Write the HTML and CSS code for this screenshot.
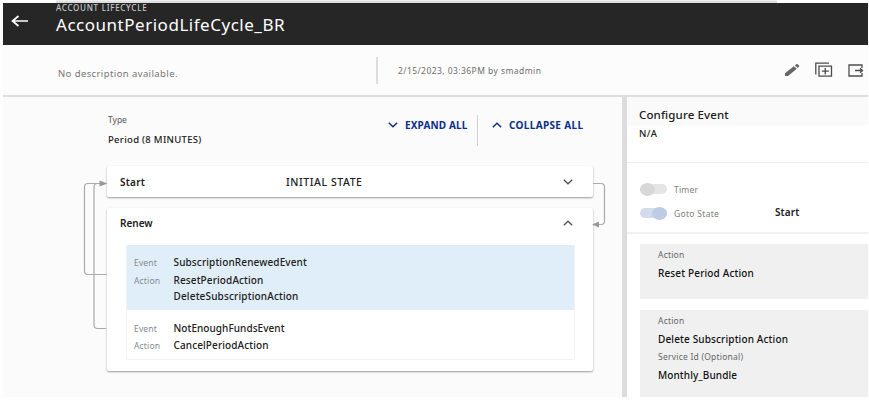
FILE: index.html
```html
<!DOCTYPE html>
<html lang="en">
<head>
<meta charset="utf-8">
<title>Account Lifecycle</title>
<link rel="stylesheet" href="styles.css">
</head>
<body>
<div class="top-strip"></div>
<div class="app">
  <header class="header">
    <svg class="back" width="18" height="14" viewBox="0 0 18 14"><path d="M7.5 2 1.500 7l6 5M1.500 7H17" fill="none" stroke="#fff" stroke-width="1.700"/></svg>
    <div class="titles">
      <div class="eyebrow">ACCOUNT LIFECYCLE</div>
      <h1 class="title">AccountPeriodLifeCycle_BR</h1>
    </div>
  </header>
  <div class="info">
    <div class="description">No description available.</div>
    <div class="stamp">2/15/2023, 03:36PM by smadmin</div>
    <div class="tools">
      <svg width="16" height="14" viewBox="0 0 16 14"><path d="M1 13v-2.700L9.800 3.300l3 2.500L4 13zM10.800 2.500 12.300 1.300q.7-.5 1.400 0l1.300 1.100q.6.6 0 1.200L13.800 5z" fill="#666"/></svg>
      <svg width="18" height="16" viewBox="0 0 18 16"><path d="M.8 12.500V1.200H14M4 4.200h12.500V14.200H4zM10.250 6v6.500M6.800 9.200h7" fill="none" stroke="#4c4c4c" stroke-width="1.300"/></svg>
      <svg width="16" height="13" viewBox="0 0 16 13"><path d="M14 4V1H1v11h13V9M7 6.500h7.500M12 4.300l2.500 2.200L12 8.700" fill="none" stroke="#4c4c4c" stroke-width="1.300"/></svg>
    </div>
  </div>
  <div class="main">
    <section class="states">
      <div class="toolbar">
        <div class="type">
          <div class="type-label">Type</div>
          <div class="type-value">Period (8 MINUTES)</div>
        </div>
        <div class="toggle-all expand">
          <svg width="10" height="6" viewBox="0 0 10 6"><path d="M.8.8 5 4.800 9.200.8" fill="none" stroke="#0c2e8a" stroke-width="1.500"/></svg>
          <span class="expand-text">EXPAND ALL</span>
        </div>
        <div class="toggle-all collapse">
          <svg width="10" height="6" viewBox="0 0 10 6"><path d="M.8 5.200 5 1.200l4.200 4" fill="none" stroke="#0c2e8a" stroke-width="1.500"/></svg>
          <span class="collapse-text">COLLAPSE ALL</span>
        </div>
      </div>
      <div class="card start">
        <div class="card-head">
          <span class="card-name">Start</span>
          <span class="initial">INITIAL STATE</span>
          <svg width="10" height="6" viewBox="0 0 10 6"><path d="M.8.8 5 4.800 9.200.8" fill="none" stroke="#555" stroke-width="1.400"/></svg>
        </div>
      </div>
      <div class="card renew">
        <div class="card-head">
          <span class="card-name renew-name">Renew</span>
          <svg width="10" height="6" viewBox="0 0 10 6"><path d="M.8 5.200 5 1.200l4.200 4" fill="none" stroke="#555" stroke-width="1.400"/></svg>
        </div>
        <div class="events">
          <div class="event selected">
            <div class="row"><span class="key">Event</span><span class="val v1">SubscriptionRenewedEvent</span></div>
            <div class="row"><span class="key">Action</span><span class="val v2">ResetPeriodAction</span></div>
            <div class="row second"><span class="key"></span><span class="val v3">DeleteSubscriptionAction</span></div>
          </div>
          <div class="event">
            <div class="row"><span class="key">Event</span><span class="val v4">NotEnoughFundsEvent</span></div>
            <div class="row"><span class="key">Action</span><span class="val v5">CancelPeriodAction</span></div>
          </div>
        </div>
      </div>
      <svg class="links" width="619" height="300" viewBox="3 97 619 300">
        <g fill="none" stroke="#aaa" stroke-width="1.200">
          <path d="M107 274.500H88q-3.500 0-3.500-3.500V187q0-3.500 3.500-3.500H101"/>
          <path d="M106 328.500H97.500q-3.500 0-3.500-3.500V187q0-3.500 3.500-3.500"/>
          <path d="M593 183.500h8q3.500 0 3.500 3.500v34q0 3.500-3.500 3.500h-3"/>
        </g>
        <path d="M99.500 180.500l8 3-8 3zM599 221.500l-7 3 7 3z" fill="#999"/>
      </svg>
    </section>
    <aside class="panel">
      <div class="configure">
        <h2 class="configure-title">Configure Event</h2>
        <div class="configure-value">N/A</div>
      </div>
      <div class="switches">
        <div class="switch-row">
          <span class="switch"><i class="knob"></i></span>
          <span class="switch-label timer">Timer</span>
        </div>
        <div class="switch-row">
          <span class="switch on"><i class="knob"></i></span>
          <span class="switch-label goto">Goto State</span>
          <span class="target">Start</span>
        </div>
      </div>
      <div class="actions">
        <div class="action">
          <div class="field">Action</div>
          <div class="field-value a1">Reset Period Action</div>
        </div>
        <div class="action last">
          <div class="field">Action</div>
          <div class="field-value a2">Delete Subscription Action</div>
          <div class="field optional">Service Id (Optional)</div>
          <div class="field-value a3">Monthly_Bundle</div>
        </div>
      </div>
    </aside>
  </div>
</div>
</body>
</html>
```
FILE: styles.css
```css
* { box-sizing: border-box; }
body { margin: 0; width: 869px; height: 406px; overflow: hidden; background: #fff; font-family: "Noto Sans", sans-serif; color: #202020; white-space: nowrap; }
svg { display: block; flex: none; }
h1, h2 { margin: 0; font-weight: 400; }
.top-strip { width: 721px; height: 3px; margin-left: 56px; background: #dfdfdf; border-top: 1px solid #efefef; }
.app { margin-left: 3px; width: 865px; height: 394px; display: flex; flex-direction: column; background: #fcfcfc; }

.header { display: flex; height: 42px; flex: none; background: #262626; color: #fff; }
.back { margin: 11px 0 0 8px; }
.titles { margin-left: 27px; }
.eyebrow { font-size: 8px; font-weight: 500; line-height: 10px; letter-spacing: .720px; color: #c8c8c8; }
.title { font-size: 17px; line-height: 24px; letter-spacing: .520px; }

.info { display: flex; height: 52px; flex: none; border-bottom: 2px solid #dedede; }
.description { width: 318px; margin-left: 55px; margin-top: 22px; line-height: 14px; font-size: 9.5px; letter-spacing: .400px; color: #757575; }
.stamp { width: 404px; height: 27px; margin-top: 12px; border-left: 2px solid #dedede; padding-left: 20px; line-height: 27px; font-size: 8.5px; letter-spacing: .440px; color: #6d6d6d; }
.tools { display: flex; align-items: center; gap: 15px; height: 50px; margin-left: 4px; }

.main { display: flex; flex: 1; min-height: 0; }
.states { position: relative; width: 619px; height: 300px; flex: none; padding: 0 29px 0 104px; background: #fbfbfb; overflow: hidden; }
.toolbar { display: flex; height: 69px; }
.type { width: 281px; padding: 15px 0 0 1px; line-height: 16px; }
.type-label { font-size: 8.5px; color: #555; }
.type-value { margin-top: 4px; font-size: 9.5px; font-weight: 500; letter-spacing: .300px; }
.toggle-all { display: flex; align-items: center; height: 31px; margin-top: 18px; padding-bottom: 11px; gap: 7px; color: #0c2e8a; font-size: 10px; font-weight: 700; }
.toggle-all.expand { width: 89px; }
.toggle-all.collapse { padding-left: 14px; border-left: 1px solid #d0d0d0; }
.expand-text { letter-spacing: .140px; }
.collapse-text { letter-spacing: .340px; }

.card { background: #fff; border-radius: 2px; box-shadow: 0 1px 2px rgba(0,0,0,.38); }
.card-head { display: flex; align-items: center; height: 31px; padding: 0 20px 0 13px; }
.card-head svg { margin-left: auto; }
.card-name { width: 166px; font-size: 10px; font-weight: 600; letter-spacing: .250px; }
.renew-name { letter-spacing: 0; }
.initial { font-size: 10.5px; font-weight: 500; letter-spacing: .560px; }
.card.renew { height: 163px; margin-top: 11px; }
.renew .card-head { height: 30px; }
.events { margin: 7px 18px 0 19px; border: 1px solid #f2f2f2; border-top: 0; }
.event { height: 49px; padding: 9.500px 0 0 7px; }
.event.selected { height: 65px; padding-top: 9px; background: #e0eefa; }
.row { display: flex; height: 17.5px; line-height: 17px; }
.row.second { margin-top: -1px; }
.key { width: 39.5px; font-size: 8.5px; letter-spacing: .160px; color: #858b90; }
.val { font-size: 10px; font-weight: 500; }
.v1 { letter-spacing: .130px; }
.v2 { letter-spacing: .120px; }
.v3 { letter-spacing: .160px; }
.v4 { letter-spacing: .060px; }
.v5 { letter-spacing: .110px; }
/* connectors run between the cards, over the panel padding */
.links { position: absolute; left: 0; top: 0; pointer-events: none; }

.panel { flex: 1; min-width: 0; border-left: 5px solid #dcdcdc; background: #fff; }
.configure { height: 66px; padding-left: 12px; border-bottom: 1px solid #ececec; background: linear-gradient(#fafafa 29px, #fff 29px); }
.configure-title { padding-top: 9px; font-size: 11.5px; font-weight: 500; line-height: 18px; letter-spacing: .120px; }
.configure-value { font-size: 9.500px; font-weight: 500; line-height: 19px; letter-spacing: .300px; }
.switches { height: 71px; padding: 14px 0 0 13px; border-bottom: 2px solid #f1f1f1; }
.switch-row { display: flex; align-items: center; height: 24px; }
.switch { display: flex; align-items: center; width: 27px; height: 10px; border-radius: 5px; background: #e5e5e5; }
.knob { width: 15px; height: 13px; flex: none; border-radius: 50%; background: #d8d8d8; }
.switch.on { justify-content: flex-end; background: #d2dcec; }
.on .knob { background: #bdcbe4; }
.switch-label { width: 101px; margin-left: 7px; font-size: 8.5px; color: #808080; }
.timer { letter-spacing: .210px; }
.goto { letter-spacing: .310px; }
.target { padding-bottom: 3px; font-size: 10px; font-weight: 600; letter-spacing: .100px; }
.actions { display: flex; flex-direction: column; gap: 11px; padding: 10px 0 0 13px; }
.action { height: 55px; padding: 3px 0 0 18px; background: #f0f0f0; line-height: 16px; }
.action.last { height: 87px; }
.field { font-size: 8.5px; letter-spacing: .200px; color: #666; }
.field-value { margin-top: 2px; font-size: 10px; font-weight: 500; color: #111; }
.optional { margin-top: 2px; letter-spacing: .230px; }
.a1 { letter-spacing: .150px; }
.a2 { letter-spacing: .140px; }
.a3 { letter-spacing: .100px; }
```
